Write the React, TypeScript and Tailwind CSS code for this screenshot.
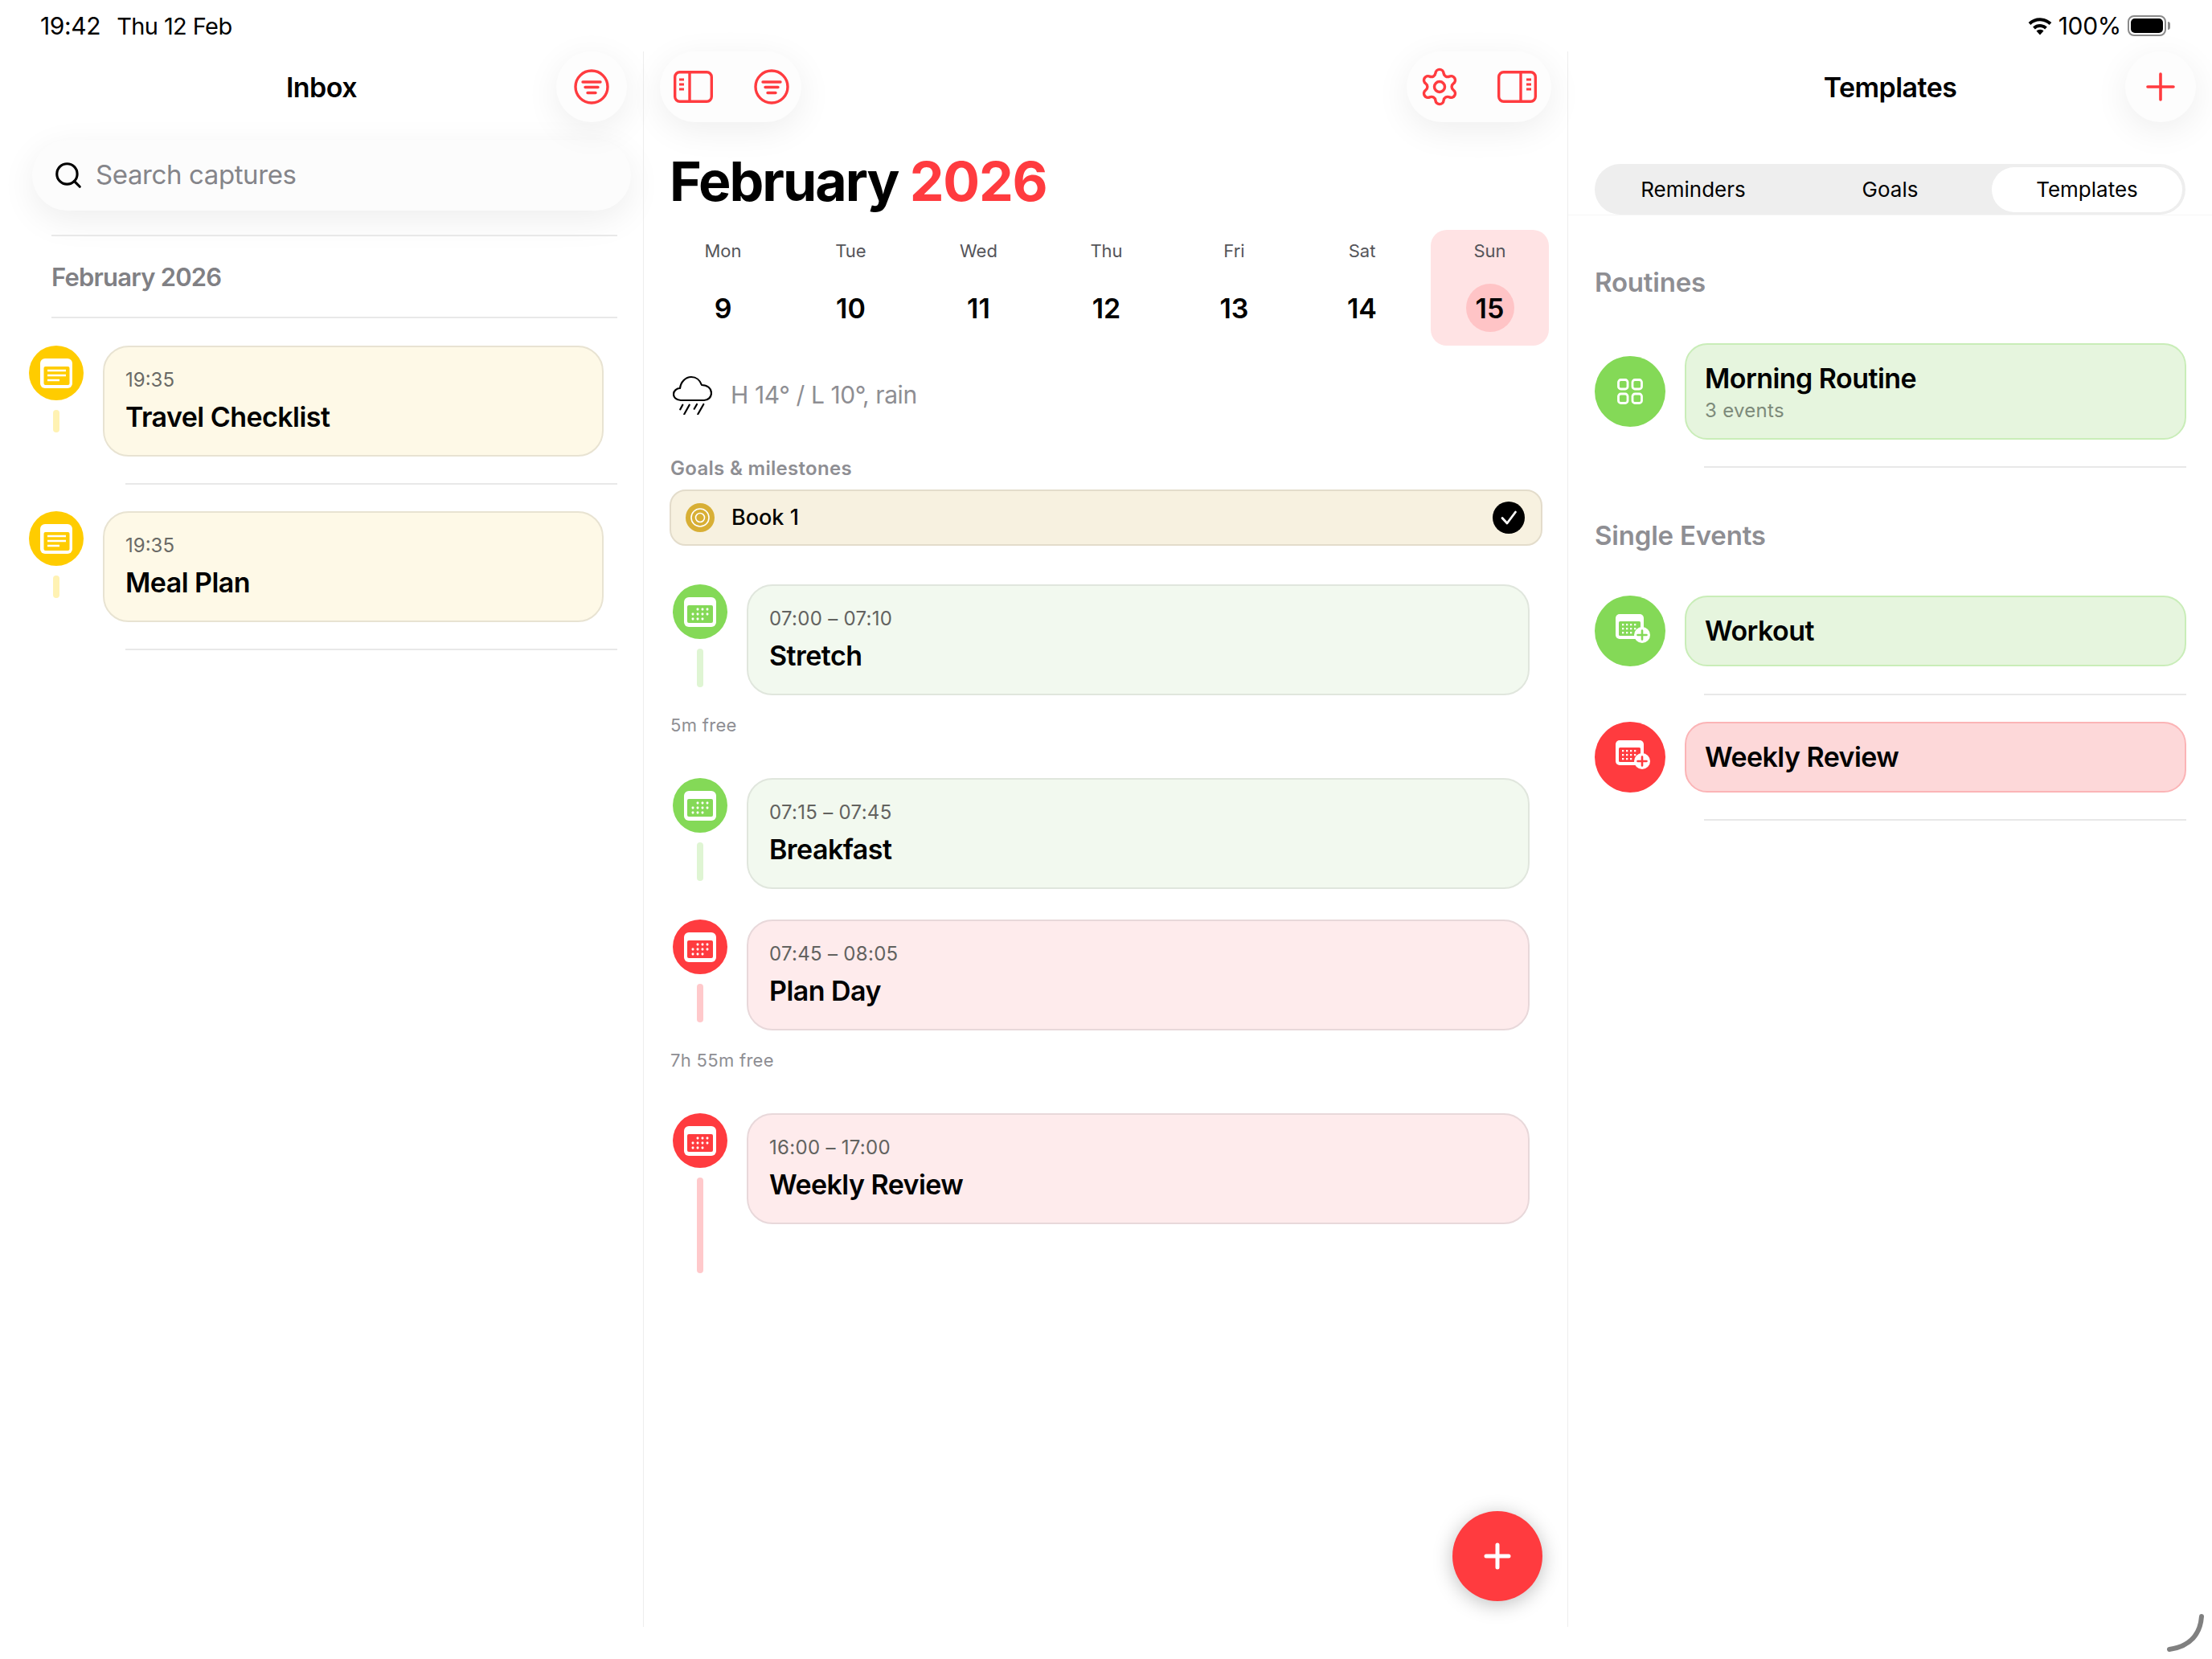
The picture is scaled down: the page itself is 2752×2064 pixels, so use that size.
import { Search, Settings } from 'lucide-react'

const RED = '#ff3b3f'

const DAYS = [
  { d: 'Mon', n: '9' },
  { d: 'Tue', n: '10' },
  { d: 'Wed', n: '11' },
  { d: 'Thu', n: '12' },
  { d: 'Fri', n: '13' },
  { d: 'Sat', n: '14' },
]

// rounded glyphs used in the event / capture bubbles
function NoteGlyph() {
  return (
    <svg width="40" height="37" viewBox="0 0 40 37">
      <rect width="40" height="37" rx="6" fill="#fff" />
      <rect x="4.5" y="10" width="32" height="23" rx="2" fill="#ffcc00" />
      <path d="M9 15h23M9 21h23M9 27h15" stroke="#fff" strokeWidth="2.4" />
    </svg>
  )
}

function CalendarGlyph({ color }: { color: string }) {
  return (
    <svg width="40" height="37" viewBox="0 0 40 37">
      <rect width="40" height="37" rx="6" fill="#fff" />
      <rect x="4" y="10" width="32" height="22" rx="2" fill={color} />
      {[17, 23, 29].map(x => <rect key={x} x={x - 1.4} y={13.6} width="2.8" height="2.8" rx="0.8" fill="#fff" />)}
      {[11, 17, 23, 29].map(x => <rect key={x} x={x - 1.4} y={19.6} width="2.8" height="2.8" rx="0.8" fill="#fff" />)}
      {[11, 17, 23].map(x => <rect key={x} x={x - 1.4} y={25.6} width="2.8" height="2.8" rx="0.8" fill="#fff" />)}
    </svg>
  )
}

function CalendarPlusGlyph({ color }: { color: string }) {
  return (
    <svg width="44" height="42" viewBox="0 0 44 42" className="ml-[8px]">
      <rect x="0" y="0" width="35" height="31" rx="5" fill="#fff" />
      <rect x="4" y="9" width="27" height="18" rx="1.5" fill={color} />
      {[8, 13, 18, 23].map(x => <rect key={x} x={x} y="12" width="2.3" height="2.3" fill="#fff" />)}
      {[8, 13, 18, 23].map(x => <rect key={x} x={x} y="17" width="2.3" height="2.3" fill="#fff" />)}
      {[8, 13, 18].map(x => <rect key={x} x={x} y="22" width="2.3" height="2.3" fill="#fff" />)}
      <circle cx="33" cy="26" r="10" fill="#fff" />
      <path d="M33 20.5v11M27.5 26h11" stroke={color} strokeWidth="2.6" strokeLinecap="round" />
    </svg>
  )
}

function FilterIcon() {
  return (
    <svg width="44" height="44" viewBox="0 0 44 44" fill="none" stroke={RED} strokeWidth="3.4" strokeLinecap="round">
      <circle cx="22" cy="22" r="20" />
      <path d="M11 16h22M14 22.500h16M17 29.500h10" />
    </svg>
  )
}

function SidebarIcon({ flip }: { flip?: boolean }) {
  return (
    <svg width="49" height="40" viewBox="0 0 49 40" fill="none" className={flip ? '-scale-x-100' : ''}>
      <rect x="1.700" y="1.700" width="45.600" height="36.600" rx="6" stroke={RED} strokeWidth="3.400" />
      <path d="M20 2v36" stroke={RED} strokeWidth="3.400" />
      <path d="M7 11h6M7 17h6M7 23h6" stroke={RED} strokeWidth="3" />
    </svg>
  )
}

function RainIcon() {
  return (
    <svg width="49" height="49" viewBox="0 0 49 49" fill="none" stroke="#000" strokeWidth="2.200" strokeLinecap="round" strokeLinejoin="round">
      <path d="M10 31C4 31 1 27 1 23.500C1 19 5 16 9 16C10 8 16 2 23 2C29 2 34 6 36 12C43 12 48 16 48 22C48 27 44 31 39 31Z" />
      <path d="M12.300 36.700L9.300 42.300M20.700 36.700L14.300 48.300M30 36L26.700 41.700M38.300 36L31.300 48.300" />
    </svg>
  )
}

function IconBtn({ children }: { children: React.ReactNode }) {
  return (
    <div className="flex h-[88px] w-[88px] items-center justify-center rounded-full bg-[#fdfdfd] shadow-[0_10px_44px_rgba(0,0,0,0.07)]">
      {children}
    </div>
  )
}

function Divider({ className }: { className: string }) {
  return <div className={`h-[2px] bg-[#e8e8e8] ${className}`} />
}

function CaptureRow({ title }: { title: string }) {
  return (
    <div className="flex gap-[24px] pl-[36px]">
      <div className="flex w-[68px] flex-col items-center gap-[12px]">
        <div className="flex h-[68px] w-[68px] items-center justify-center rounded-full bg-[#ffcc00]"><NoteGlyph /></div>
        <div className="h-[28px] w-[8px] rounded-full bg-[#fff2b3]" />
      </div>
      <div className="flex h-[138px] w-[623px] flex-col justify-center rounded-[32px] border-2 border-[#e8e3d2] bg-[#fef9e7] pl-[26px]">
        <span className="text-[24px] leading-[32px] text-[#6a6a66]">19:35</span>
        <span className="mt-[8px] text-[34px] leading-[44px] font-[580] tracking-[-0.55px] text-black">{title}</span>
      </div>
    </div>
  )
}

function EventRow({ time, title, icon, bar, card, barH }: { time: string; title: string; icon: string; bar: string; card: string; barH: string }) {
  return (
    <div className="flex gap-[24px] pl-[36px]">
      <div className="flex w-[68px] flex-col items-center gap-[12px]">
        <div className="flex h-[68px] w-[68px] items-center justify-center rounded-full" style={{ background: icon }}><CalendarGlyph color={icon} /></div>
        <div className={`w-[8px] rounded-full ${bar} ${barH}`} />
      </div>
      <div className={`flex h-[138px] w-[974px] flex-col justify-center rounded-[32px] border-2 pl-[26px] ${card}`}>
        <span className="text-[24px] leading-[32px] tracking-[0.3px] text-[#62625f]">{time}</span>
        <span className="mt-[8px] text-[34px] leading-[44px] font-[580] tracking-[-0.55px] text-black">{title}</span>
      </div>
    </div>
  )
}

function TemplateRow({ title, sub, circle, card, children }: { title: string; sub?: string; circle: string; card: string; children: React.ReactNode }) {
  return (
    <div className="flex items-center gap-[24px] pl-[33px]">
      <div className={`flex h-[88px] w-[88px] shrink-0 items-center justify-center rounded-full ${circle}`}>{children}</div>
      <div className={`flex w-[624px] flex-col justify-center rounded-[28px] border-2 pl-[23px] ${sub ? 'h-[120px]' : 'h-[88px]'} ${card}`}>
        <span className="text-[34px] leading-[44px] font-[580] tracking-[-0.55px] text-black">{title}</span>
        {sub && <span className="mt-[3px] text-[24px] leading-[30px] tracking-[0.3px] text-[#7d8a7a]">{sub}</span>}
      </div>
    </div>
  )
}

export default function App() {
  return (
    <div className="relative flex h-[2064px] w-[2752px] flex-col overflow-hidden bg-white font-['Inter',sans-serif] text-black">
      {/* status bar */}
      <div className="flex h-[64px] items-center justify-between pr-[52px] pl-[50px] text-[30px] font-normal">
        <div className="flex items-baseline gap-[20px]">
          <span className="tracking-[-0.4px]">19:42</span>
          <span className="text-[29px] tracking-[-0.6px]">Thu 12 Feb</span>
        </div>
        <div className="flex items-center gap-[10px]">
          <svg width="30" height="24" viewBox="0 0 30 24" fill="none" stroke="#000" strokeWidth="4" className="mr-[-2px]">
            <path d="M2 9.500A19 19 0 0 1 28 9.500M7.500 15A11 11 0 0 1 22.500 15" />
            <path d="M10.500 18.500L15 23.500L19.500 18.500A6.500 6.500 0 0 0 10.500 18.500Z" fill="#000" stroke="none" />
          </svg>
          <span className="tracking-[-0.3px]">100%</span>
          <div className="ml-[-2px] flex items-center gap-[2px]">
            <div className="h-[26px] w-[48px] rounded-[8px] border-2 border-[#8a8a8a] p-[2px]">
              <div className="h-full w-full rounded-[5px] bg-black" />
            </div>
            <div className="h-[10px] w-[3px] rounded-r-full bg-[#8a8a8a]" />
          </div>
        </div>
      </div>

      <div className="flex h-[1960px]">
        {/* Inbox */}
        <div className="w-[800px] shrink-0">
          <div className="grid grid-cols-[1fr_auto_1fr] items-center pr-[20px]">
            <div />
            <h1 className="pl-[20px] text-[34px] font-[580] tracking-[-0.55px]">Inbox</h1>
            <div className="flex justify-end"><IconBtn><FilterIcon /></IconBtn></div>
          </div>
          <div className="mt-[22px] ml-[40px] flex h-[88px] w-[745px] items-center gap-[15px] rounded-[44px] bg-[#fcfcfc] pl-[26px] shadow-[0_12px_44px_rgba(0,0,0,0.07)]">
            <Search size={38} strokeWidth={2} color="#000" />
            <span className="text-[33px] tracking-[-0.4px] text-[#85858a]">Search captures</span>
          </div>
          <Divider className="mt-[30px] ml-[64px] w-[704px]" />
          <div className="mt-[31px] ml-[64px] text-[31px] leading-[40px] font-semibold tracking-[-0.8px] text-[#808084]">February 2026</div>
          <Divider className="mt-[29px] ml-[64px] w-[704px]" />
          <div className="mt-[34px]"><CaptureRow title="Travel Checklist" /></div>
          <Divider className="mt-[33px] ml-[156px] w-[612px]" />
          <div className="mt-[33px]"><CaptureRow title="Meal Plan" /></div>
          <Divider className="mt-[33px] ml-[156px] w-[612px]" />
        </div>

        {/* Calendar */}
        <div className="relative w-[1151px] shrink-0 border-x border-[#ededed]">
          <div className="flex justify-between pr-[20px] pl-[20px]">
            <div className="flex h-[88px] w-[176px] items-center justify-between rounded-[44px] bg-[#fdfdfd] pr-[15px] pl-[17px] shadow-[0_10px_44px_rgba(0,0,0,0.07)]">
              <SidebarIcon />
              <FilterIcon />
            </div>
            <div className="flex h-[88px] w-[180px] items-center justify-between rounded-[44px] bg-[#fdfdfd] pr-[18px] pl-[15px] shadow-[0_10px_44px_rgba(0,0,0,0.07)]">
              <Settings size={52} color={RED} strokeWidth={1.600} />
              <SidebarIcon flip />
            </div>
          </div>
          <h2 className="mt-[33px] ml-[32px] text-[68px] leading-[80px] font-bold tracking-[-2px]">
            February <span className="tracking-[-1.2px] text-[#ff3b3f]">2026</span>
          </h2>
          <div className="mt-[21px] ml-[19px] grid w-[1113px] grid-cols-7">
            {DAYS.map(x => (
              <div key={x.d} className="flex h-[144px] flex-col items-center">
                <span className="mt-[14px] text-[22px] leading-[24px] text-[#55555a]">{x.d}</span>
                <span className="mt-[29px] flex h-[60px] items-center text-[34px] font-[580]">{x.n}</span>
              </div>
            ))}
            <div className="mx-[6px] flex h-[144px] flex-col items-center rounded-[20px] bg-[#ffe3e4]">
              <span className="mt-[14px] text-[22px] leading-[24px] text-[#55555a]">Sun</span>
              <span className="mt-[29px] flex h-[60px] w-[60px] items-center justify-center rounded-full bg-[#ffc4c6] text-[34px] font-[580]">15</span>
            </div>
          </div>
          <div className="mt-[37px] ml-[36px] flex items-center gap-[23px]">
            <RainIcon />
            <span className="text-[30px] tracking-[-0.4px] text-[#8e8e93]">H 14° / L 10°, rain</span>
          </div>
          <div className="mt-[52px] ml-[33px] text-[24px] leading-[30px] font-semibold tracking-[0.3px] text-[#8e8e93]">Goals &amp; milestones</div>
          <div className="mt-[11px] ml-[32px] flex h-[70px] w-[1086px] items-center justify-between rounded-[20px] border-2 border-[#e3dccb] bg-[#f7f1e0] pr-[20px] pl-[18px]">
            <div className="flex items-center gap-[21px]">
              <svg width="36" height="36" viewBox="0 0 36 36" fill="none">
                <circle cx="18" cy="18" r="18" fill="#d8af35" />
                <circle cx="18" cy="18" r="11" stroke="#fff" strokeWidth="1.600" />
                <circle cx="18" cy="18" r="5.500" stroke="#fff" strokeWidth="1.600" />
              </svg>
              <span className="text-[27px] font-medium">Book 1</span>
            </div>
            <svg width="40" height="40" viewBox="0 0 40 40" fill="none">
              <circle cx="20" cy="20" r="20" fill="#000" />
              <path d="M12 20.500L18 27L28.500 13" stroke="#fff" strokeWidth="2.800" strokeLinecap="round" strokeLinejoin="round" />
            </svg>
          </div>
          <div className="mt-[48px]">
            <EventRow time="07:00 – 07:10" title="Stretch" icon="#84d957" bar="bg-[#dff5d3]" barH="h-[48px]" card="border-[#e0e6dd] bg-[#f2f9ef]" />
          </div>
          <div className="mt-[23px] ml-[33px] text-[22px] leading-[28px] tracking-[0.3px] text-[#8e8e93]">5m free</div>
          <div className="mt-[52px]">
            <EventRow time="07:15 – 07:45" title="Breakfast" icon="#84d957" bar="bg-[#dff5d3]" barH="h-[48px]" card="border-[#e0e6dd] bg-[#f2f9ef]" />
          </div>
          <div className="mt-[38px]">
            <EventRow time="07:45 – 08:05" title="Plan Day" icon="#ff3b3f" bar="bg-[#ffc9cb]" barH="h-[48px]" card="border-[#e8d8da] bg-[#feebec]" />
          </div>
          <div className="mt-[23px] ml-[33px] text-[22px] leading-[28px] tracking-[0.3px] text-[#8e8e93]">7h 55m free</div>
          <div className="mt-[52px]">
            <EventRow time="16:00 – 17:00" title="Weekly Review" icon="#ff3b3f" bar="bg-[#ffc9cb]" barH="h-[119px]" card="border-[#e8d8da] bg-[#feebec]" />
          </div>
          {/* floating add */}
          <div className="absolute right-[31px] bottom-[32px] flex h-[112px] w-[112px] items-center justify-center rounded-full bg-[#ff3b3f] shadow-[0_4px_24px_rgba(0,0,0,0.25)]">
            <svg width="34" height="34" viewBox="0 0 34 34" stroke="#fff" strokeWidth="5" strokeLinecap="round">
              <path d="M17 3v28M3 17h28" />
            </svg>
          </div>
        </div>

        {/* Templates */}
        <div className="min-w-0 flex-1">
          <div className="grid grid-cols-[1fr_auto_1fr] items-center pr-[20px]">
            <div />
            <h1 className="pl-[20px] text-[34px] font-[580] tracking-[-0.55px]">Templates</h1>
            <div className="flex justify-end">
              <IconBtn>
                <svg width="36" height="36" viewBox="0 0 36 36" stroke={RED} strokeWidth="3.600" strokeLinecap="round">
                  <path d="M18 2v32M2 18h32" />
                </svg>
              </IconBtn>
            </div>
          </div>
          <div className="border-b border-[#f6f6f6] pt-[52px]">
            <div className="ml-[33px] grid h-[63px] w-[735px] grid-cols-3 items-center rounded-full bg-[#eeeeee] text-center text-[26px] font-normal">
              <span>Reminders</span>
              <span>Goals</span>
              <span className="mx-[4px] flex h-[56px] items-center justify-center rounded-full bg-white">Templates</span>
            </div>
          </div>
          <div className="mt-[63px] ml-[33px] text-[33px] leading-[40px] font-semibold tracking-[-0.2px] text-[#8e8e93]">Routines</div>
          <div className="mt-[56px]">
            <TemplateRow title="Morning Routine" sub="3 events" circle="bg-[#84d957]" card="border-[#c9edb8] bg-[#e6f5de]">
              <svg width="32" height="32" viewBox="0 0 32 32" fill="none" stroke="#fff" strokeWidth="2.800">
                <rect x="1.500" y="1.500" width="11.500" height="11.500" rx="3" />
                <rect x="19" y="1.500" width="11.500" height="11.500" rx="3" />
                <rect x="1.500" y="19" width="11.500" height="11.500" rx="3" />
                <rect x="19" y="19" width="11.500" height="11.500" rx="3" />
              </svg>
            </TemplateRow>
          </div>
          <Divider className="mt-[33px] ml-[169px] w-[600px]" />
          <div className="mt-[64px] ml-[33px] text-[33px] leading-[40px] font-semibold tracking-[-0.2px] text-[#8e8e93]">Single Events</div>
          <div className="mt-[55px]">
            <TemplateRow title="Workout" circle="bg-[#84d957]" card="border-[#c9edb8] bg-[#e6f5de]">
              <CalendarPlusGlyph color="#84d957" />
            </TemplateRow>
          </div>
          <Divider className="mt-[34px] ml-[169px] w-[600px]" />
          <div className="mt-[33px]">
            <TemplateRow title="Weekly Review" circle="bg-[#ff3b3f]" card="border-[#fbb4b6] bg-[#fdd8d9]">
              <CalendarPlusGlyph color="#ff3b3f" />
            </TemplateRow>
          </div>
          <Divider className="mt-[33px] ml-[169px] w-[600px]" />
        </div>
      </div>

      {/* corner sliver of the pointer / home indicator */}
      <svg className="absolute top-[2008px] left-[2696px]" width="46" height="47" viewBox="0 0 46 47" fill="none">
        <path d="M43 3C41.500 24 30 40 3 44" stroke="#808080" strokeWidth="6" strokeLinecap="round" />
      </svg>
    </div>
  )
}
